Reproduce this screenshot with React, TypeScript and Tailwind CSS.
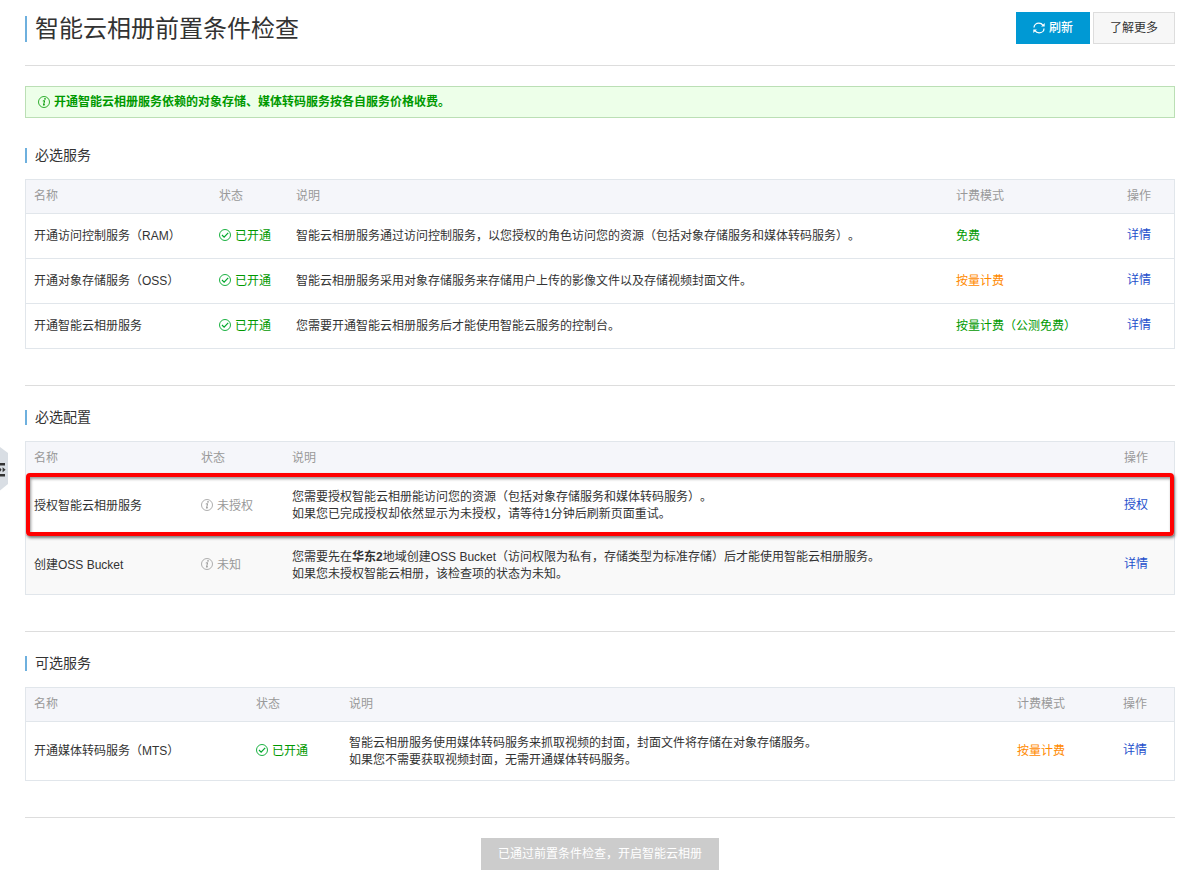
import React from "react";

interface Row {
  name: string;
  ok: boolean;
  status: string;
  description: React.ReactNode;
  billing?: string;
  billingColor?: string;
  action: string;
  highlight?: boolean;
}

interface CheckTableProps {
  title: string;
  widths: string[];
  rows: Row[];
  rowHeight: string;
}

const GREEN = "text-[#090]";
const ORANGE = "text-[#ff8a00]";

const requiredServices: Row[] = [
  {
    name: "开通访问控制服务（RAM）",
    ok: true,
    status: "已开通",
    description:
      "智能云相册服务通过访问控制服务，以您授权的角色访问您的资源（包括对象存储服务和媒体转码服务）。",
    billing: "免费",
    billingColor: GREEN,
    action: "详情",
  },
  {
    name: "开通对象存储服务（OSS）",
    ok: true,
    status: "已开通",
    description: "智能云相册服务采用对象存储服务来存储用户上传的影像文件以及存储视频封面文件。",
    billing: "按量计费",
    billingColor: ORANGE,
    action: "详情",
  },
  {
    name: "开通智能云相册服务",
    ok: true,
    status: "已开通",
    description: "您需要开通智能云相册服务后才能使用智能云服务的控制台。",
    billing: "按量计费（公测免费）",
    billingColor: GREEN,
    action: "详情",
  },
];

const requiredConfig: Row[] = [
  {
    name: "授权智能云相册服务",
    ok: false,
    status: "未授权",
    description: (
      <>
        您需要授权智能云相册能访问您的资源（包括对象存储服务和媒体转码服务）。
        <br />
        如果您已完成授权却依然显示为未授权，请等待1分钟后刷新页面重试。
      </>
    ),
    action: "授权",
    highlight: true,
  },
  {
    name: "创建OSS Bucket",
    ok: false,
    status: "未知",
    description: (
      <>
        您需要先在<b>华东2</b>地域创建OSS Bucket（访问权限为私有，存储类型为标准存储）后才能使用智能云相册服务。
        <br />
        如果您未授权智能云相册，该检查项的状态为未知。
      </>
    ),
    action: "详情",
  },
];

const optionalServices: Row[] = [
  {
    name: "开通媒体转码服务（MTS）",
    ok: true,
    status: "已开通",
    description: (
      <>
        智能云相册服务使用媒体转码服务来抓取视频的封面，封面文件将存储在对象存储服务。
        <br />
        如果您不需要获取视频封面，无需开通媒体转码服务。
      </>
    ),
    billing: "按量计费",
    billingColor: ORANGE,
    action: "详情",
  },
];

const CheckIcon = () => (
  <svg viewBox="0 0 12 12" className="w-3 h-3 shrink-0" fill="none" stroke="#00a82d" aria-hidden="true">
    <circle cx="6" cy="6" r="5.5" strokeWidth="0.9" />
    <path d="M3 6 5.1 8.1 9.2 3.9" strokeWidth="1.2" />
  </svg>
);

const InfoIcon = () => (
  <svg viewBox="0 0 12 12" className="w-3 h-3 shrink-0" fill="none" stroke="currentColor" aria-hidden="true">
    <circle cx="6" cy="6" r="5.5" strokeWidth="0.8" />
    <path d="M4.8 5 6.6 4.7 5.5 9.2 7 8.6" strokeWidth="1" />
    <circle cx="7" cy="2.9" r="0.8" fill="currentColor" stroke="none" />
  </svg>
);

const RefreshIcon = () => (
  <svg viewBox="0 0 12 12" className="w-3 h-3 shrink-0" fill="none" stroke="currentColor" aria-hidden="true">
    <path d="M1 5.6C1 3 3.2 1.1 5.9 1.1c1.8 0 3.2.8 4.1 2.2" strokeWidth="1.3" />
    <path d="M11 6.4C11 9 8.8 10.9 6.1 10.9c-1.8 0-3.2-.8-4.1-2.2" strokeWidth="1.3" />
    <path d="M11.7 1v3.6H8.1z" fill="currentColor" stroke="none" />
    <path d="M.3 11V7.4h3.6z" fill="currentColor" stroke="none" />
  </svg>
);

const CheckTable: React.FC<CheckTableProps> = ({ title, widths, rows, rowHeight }) => {
  const hasBilling = rows.some((row) => row.billing);
  const headers = hasBilling
    ? ["名称", "状态", "说明", "计费模式", "操作"]
    : ["名称", "状态", "说明", "操作"];

  return (
    <section>
      <h2 className="border-l-2 border-[#6eb0de] pl-2 text-sm leading-[15px]">{title}</h2>
      <div className="mt-4 border border-[#e1e6eb]">
        <table className="w-full table-fixed text-left">
          <thead>
            <tr className="h-[33px] bg-[#f5f6fa] border-b border-[#e1e6eb] text-[#999]">
              {headers.map((header, i) => (
                <th key={header} className={`px-2 font-normal ${widths[i]}`}>
                  {header}
                </th>
              ))}
            </tr>
          </thead>
          <tbody>
            {rows.map((row, i) => (
              <tr
                key={row.name}
                className={`relative border-[#e1e6eb] not-last:border-b ${
                  row.highlight ? "h-[60px]" : rowHeight
                } ${!hasBilling && i % 2 === 1 ? "bg-[#f9f9f9]" : ""}`}
              >
                <td className="px-2 pt-0.5">
                  {row.name}
                  {row.highlight && (
                    <span className="absolute inset-x-0 -top-[2px] -bottom-[2px] z-10 rounded border-4 border-[#f00] shadow-[1px_2px_3px_rgba(0,0,0,0.5),inset_1px_2px_3px_rgba(0,0,0,0.4)] pointer-events-none" />
                  )}
                </td>
                <td className="px-2 pt-0.5">
                  <span className={`flex items-start gap-1 ${row.ok ? GREEN : "text-[#999]"}`}>
                    <span className="pt-px">{row.ok ? <CheckIcon /> : <InfoIcon />}</span>
                    {row.status}
                  </span>
                </td>
                <td className="px-2 pt-0.5">{row.description}</td>
                {hasBilling && <td className={`px-2 pt-0.5 ${row.billingColor}`}>{row.billing}</td>}
                <td className="px-2">
                  <a href="#" className="text-[#1e50cc] hover:underline">
                    {row.action}
                  </a>
                </td>
              </tr>
            ))}
          </tbody>
        </table>
      </div>
    </section>
  );
};

const Divider = () => <hr className="mt-9 border-[#ddd]" />;

const App: React.FC = () => {
  return (
    <main className="relative min-h-screen bg-white pl-[25px] pr-[10px] pt-3 pb-[10px] text-xs leading-[17px] text-[#333] font-['Liberation_Sans','Noto_Sans_CJK_SC',sans-serif] [text-spacing-trim:space-all]">
      {/* sidebar collapse handle */}
      <button type="button" aria-label="展开菜单" className="absolute left-0 top-[447px]">
        <svg viewBox="0 0 8 44" className="block w-2 h-11" aria-hidden="true">
          <path d="M0 0 8 6V37L0 43.5z" fill="#d9dee4" />
          <path d="M0 16h5v2.5H0zM0 27h5v2.5H0z" fill="#333" />
          <path d="M0 20.8 1.6 22.8 0 24.8zM2.6 20.3 5.6 22.8 2.6 25.3z" fill="#333" />
        </svg>
      </button>

      <header className="flex items-start justify-between border-b border-[#ddd] pb-[21px]">
        <h1 className="mt-1 border-l-2 border-[#6eb0de] pl-2 text-2xl leading-[26px]">
          智能云相册前置条件检查
        </h1>
        <div className="flex gap-[3px]">
          <button
            type="button"
            className="flex items-center gap-1 h-8 px-4 border border-[#0099d4] bg-[#0099d4] text-white font-medium"
          >
            <RefreshIcon />
            刷新
          </button>
          <button type="button" className="h-8 px-4 border border-[#ddd] bg-[#f7f7f7]">
            了解更多
          </button>
        </div>
      </header>

      <div className="flex items-center gap-1 h-8 mt-5 mb-[30px] px-3 border border-[#bbdfb5] bg-[#edffe9] text-[#090] font-bold">
        <InfoIcon />
        开通智能云相册服务依赖的对象存储、媒体转码服务按各自服务价格收费。
      </div>

      <div className="flex flex-col">
        <CheckTable
          title="必选服务"
          widths={["w-[185px]", "w-[77px]", "", "w-[171px]", "w-[55px]"]}
          rows={requiredServices}
          rowHeight="h-[45px]"
        />
        <Divider />
        <div className="h-6" />
        <CheckTable
          title="必选配置"
          widths={["w-[167px]", "w-[91px]", "", "w-[58px]"]}
          rows={requiredConfig}
          rowHeight="h-[59px]"
        />
        <Divider />
        <div className="h-6" />
        <CheckTable
          title="可选服务"
          widths={["w-[222px]", "w-[93px]", "", "w-[106px]", "w-[59px]"]}
          rows={optionalServices}
          rowHeight="h-[59px]"
        />
        <Divider />
      </div>

      <div className="mt-5 text-center">
        <button type="button" disabled className="h-8 px-4 border border-[#ccc] bg-[#ccc] text-white">
          已通过前置条件检查，开启智能云相册
        </button>
      </div>
    </main>
  );
};

export default App;
